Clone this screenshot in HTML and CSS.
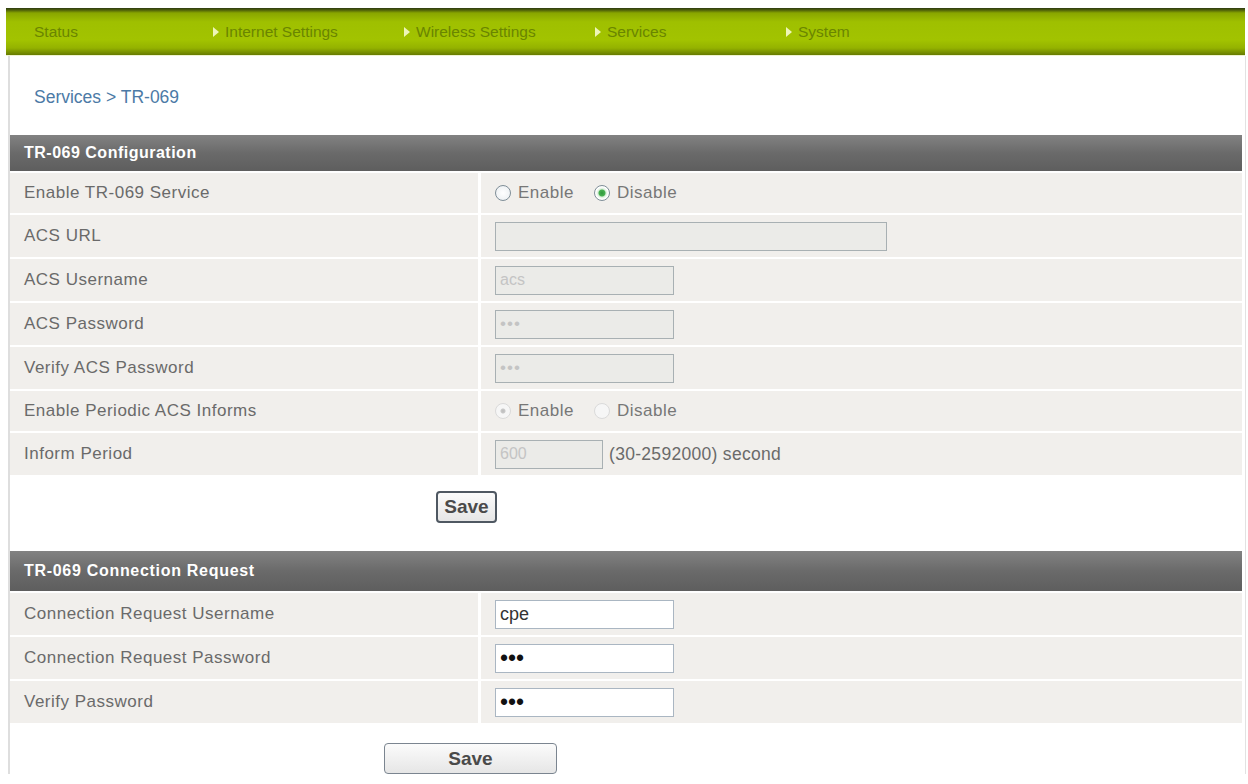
FILE: index.html
```html
<!DOCTYPE html>
<html lang="en">
<head>
  <meta charset="UTF-8" />
  <title>Services - TR-069</title>
  <link rel="stylesheet" href="styles.css">
</head>
<body>

<div class="topnav">
  <a class="nav-item first">Status</a>
  <a class="nav-item">Internet Settings</a>
  <a class="nav-item">Wireless Settings</a>
  <a class="nav-item">Services</a>
  <a class="nav-item">System</a>
</div>

<div class="page">
  <div class="crumb">Services &gt; TR-069</div>

  <div class="box-head">TR-069 Configuration</div>
  <div class="form-grid cfg">
    <div class="lbl">Enable TR-069 Service</div>
    <div class="val">
      <label class="opt"><input type="radio" name="tr069">Enable</label>
      <label class="opt"><input type="radio" name="tr069" checked>Disable</label>
    </div>

    <div class="lbl">ACS URL</div>
    <div class="val"><input class="field wide" type="text" value="" disabled></div>

    <div class="lbl">ACS Username</div>
    <div class="val"><input class="field" type="text" value="acs" disabled></div>

    <div class="lbl">ACS Password</div>
    <div class="val"><input class="field pw" type="password" value="acs" disabled></div>

    <div class="lbl">Verify ACS Password</div>
    <div class="val"><input class="field pw" type="password" value="acs" disabled></div>

    <div class="lbl">Enable Periodic ACS Informs</div>
    <div class="val">
      <label class="opt off"><input type="radio" name="inform" checked disabled>Enable</label>
      <label class="opt off"><input type="radio" name="inform" disabled>Disable</label>
    </div>

    <div class="lbl">Inform Period</div>
    <div class="val"><input class="field narrow" type="text" value="600" disabled><span class="hint">(30-2592000) second</span></div>
  </div>

  <div class="actions first-save"><button class="btn small">Save</button></div>

  <div class="box-head second">TR-069 Connection Request</div>
  <div class="form-grid req">
    <div class="lbl">Connection Request Username</div>
    <div class="val"><input class="field live" type="text" value="cpe"></div>

    <div class="lbl">Connection Request Password</div>
    <div class="val"><input class="field live pw" type="password" value="cpe"></div>

    <div class="lbl">Verify Password</div>
    <div class="val"><input class="field live pw" type="password" value="cpe"></div>
  </div>

  <div class="actions last-save"><button class="btn big">Save</button></div>
</div>

</body>
</html>
```

FILE: styles.css
```css
body { margin: 0; padding: 0; background: #fff; font-family: "Liberation Sans", Arial, sans-serif; color: #666; }

.topnav { display: flex; margin: 8px 3px 0 6px; height: 48px; padding-left: 16px; box-sizing: border-box;
  background: linear-gradient(#2e3a12 0, #4d5f0a 2px, #89a600 5px, #9fc000 14px, #a2c300 32px, #94b200 40px, #748b00 45px, #5f7200 48px);
  border-bottom: 1px solid #eef3cf; }
.nav-item { width: 191px; display: flex; align-items: center; font-size: 15.5px; color: #6a8500; }
.nav-item::before { content: ""; width: 0; height: 0; margin-right: 6px; border-left: 6px solid #eef5b8; border-top: 5px solid transparent; border-bottom: 5px solid transparent; }
.nav-item.first::before { visibility: hidden; }

.page { margin: 0 2px 0 8px; border-left: 2px solid #dedede; border-right: 1px solid #e2e2e2; padding: 0 3px 0 0; }

.crumb { padding: 31px 0 28px 24px; line-height: 20px; font-size: 17.5px; color: #4c7aa6; }

.box-head { height: 36px; line-height: 36px; padding-left: 14px; margin-bottom: 2px; font-size: 16px; letter-spacing: 0.5px; font-weight: bold; color: #fff;
  background: linear-gradient(#828282, #6a6a6a 50%, #5e5e5e); }
.box-head.second { height: 40px; line-height: 39px; letter-spacing: 0.7px; }

.form-grid { display: grid; grid-template-columns: 468px 1fr; column-gap: 3px; row-gap: 2px; }
.form-grid.cfg { grid-template-rows: 40px 42px 42px 42px 42px 40px 42px; }
.form-grid.req { grid-auto-rows: 42px; }
.lbl, .val { background: #f1efec; display: flex; align-items: center; padding-left: 14px; font-size: 17px; letter-spacing: 0.5px; }
.lbl { color: #6a6a6a; }

.opt { display: flex; align-items: center; margin-right: 20px; color: #777; }
.opt input { appearance: none; -webkit-appearance: none; width: 16px; height: 16px; margin: 0 7px 0 0; border: 1px solid #7f8e98; border-radius: 50%;
  background: radial-gradient(#fff, #e9edf0); box-sizing: border-box; }
.opt input:checked { background: radial-gradient(circle, #2f9a3c 0, #48b052 3px, #d8efd9 4px, #fff 6px); }
.opt.off input { border-color: #dadada; background: #f6f6f6; }
.opt.off input:checked { background: radial-gradient(circle, #bdbdbd 0, #c8c8c8 2px, #f6f6f6 3px); }

.field { box-sizing: border-box; width: 179px; height: 29px; padding: 0 4px; border: 1px solid #a8b0b3; background: #ebebe8;
  font-family: "Liberation Sans", Arial, sans-serif; font-size: 16px; color: #c4c4c4; }
.field.wide { width: 392px; }
.field.narrow { width: 108px; margin-right: 6px; }
.field.pw { font-size: 17px; letter-spacing: 1px; }
.field.live { background: #fff; border-color: #aab6c2; color: #333; font-size: 18px; }
.field.live.pw { font-size: 23px; letter-spacing: 0; color: #111; }
.hint { color: #6a6a6a; font-size: 17.5px; letter-spacing: 0.3px; }

.actions.first-save { padding: 16px 0 28px 426px; }
.actions.last-save { padding: 20px 0 0 374px; }
.btn { box-sizing: border-box; height: 32px; border: 2px solid #4f5862; border-radius: 4px; background: linear-gradient(#fbfbfb, #e6e6e6);
  font-family: "Liberation Sans", Arial, sans-serif; font-size: 19px; font-weight: bold; color: #4a4a4a; padding: 0; }
.btn.small { width: 61px; }
.btn.big { width: 173px; height: 31px; border: 1px solid #7b8590; }
```
